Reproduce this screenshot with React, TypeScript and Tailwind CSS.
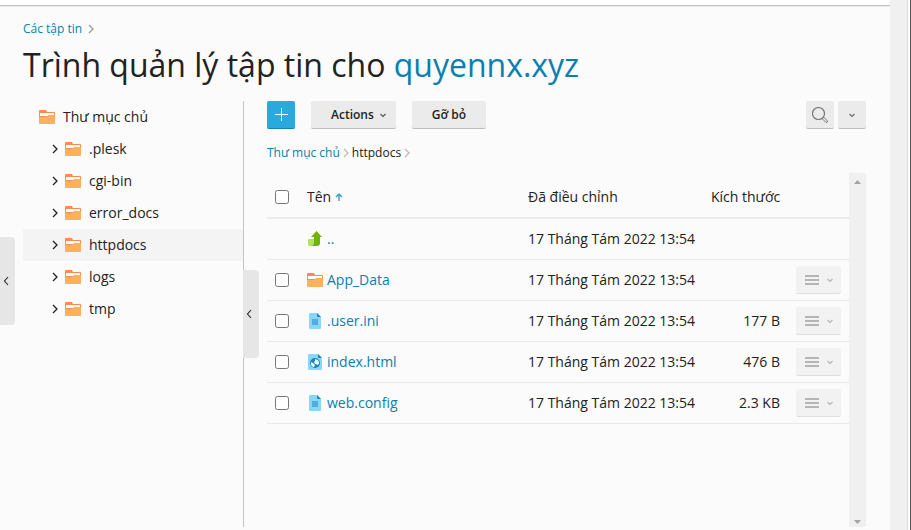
import type { ReactNode } from "react";

type FileKind = "folder" | "file" | "html";

const folders = [".plesk", "cgi-bin", "error_docs", "httpdocs", "logs", "tmp"];

const files: { name: string; kind: FileKind; date: string; size: string }[] = [
  { name: "App_Data", kind: "folder", date: "17 Tháng Tám 2022 13:54", size: "" },
  { name: ".user.ini", kind: "file", date: "17 Tháng Tám 2022 13:54", size: "177 B" },
  { name: "index.html", kind: "html", date: "17 Tháng Tám 2022 13:54", size: "476 B" },
  { name: "web.config", kind: "file", date: "17 Tháng Tám 2022 13:54", size: "2.3 KB" },
];

function FolderIcon() {
  return (
    <svg className="h-4 w-4 shrink-0" viewBox="0 0 16 16" aria-hidden="true">
      <path d="M0 2a1 1 0 0 1 1-1h6l1 2h7a1 1 0 0 1 1 1v5H0z" fill="#ff8a50" />
      <path d="M1 4h14v3H1z" fill="#fff" />
      <path d="M0 8h7l2-2h7v8a1 1 0 0 1-1 1H1a1 1 0 0 1-1-1z" fill="#ffb05c" />
    </svg>
  );
}

function FileIcon() {
  return (
    <svg className="h-4 w-4 shrink-0" viewBox="0 0 16 16" aria-hidden="true">
      <path d="M3 0h7l4 4v11a1 1 0 0 1-1 1H3a1 1 0 0 1-1-1V1a1 1 0 0 1 1-1z" fill="#8ad6f7" />
      <path d="M10 0l4 4h-3a1 1 0 0 1-1-1z" fill="#1b84b4" />
      <path d="M5 6h6v6H5z" fill="#4faedb" />
    </svg>
  );
}

function HtmlIcon() {
  return (
    <svg className="h-4 w-4 shrink-0" viewBox="0 0 16 16" aria-hidden="true">
      <path d="M2 0h9l4 4v11a1 1 0 0 1-1 1H2a1 1 0 0 1-1-1V1a1 1 0 0 1 1-1z" fill="#8ad6f7" />
      <path d="M11 0l4 4h-3a1 1 0 0 1-1-1z" fill="#1b84b4" />
      <circle cx="8" cy="9" r="5" fill="#1b84b4" />
      <path d="M4 8l2 1 2 2-1 2H6l-2-2zM8 5l3 1 1 2v2l-2 1-1-1H8L7 8l1-1z" fill="#e8f7fe" />
    </svg>
  );
}

function UpIcon() {
  return (
    <svg className="h-4 w-4 shrink-0" viewBox="0 0 16 16" aria-hidden="true">
      <path d="M2 8h5v7H3a2 2 0 0 1-2-2V9a1 1 0 0 1 1-1z" fill="#b0e35f" />
      <path d="M9.500 0L15 6h-2v6q0 3-3 3H5q2-1 2-3V6H4z" fill="#6fb500" />
    </svg>
  );
}

function Chevron({ dir, className }: { dir: "left" | "right" | "down"; className: string }) {
  const paths = {
    left: "M7 1L3.500 5 7 9",
    right: "M3 1l4 4-4 4",
    down: "M2.500 4L5 6.500 7.500 4",
  };
  return (
    <svg className={`h-[10px] w-[10px] shrink-0 ${className}`} viewBox="0 0 10 10" fill="none" stroke="currentColor" aria-hidden="true">
      <path d={paths[dir]} strokeWidth={dir === "right" ? 1.3 : 1.1} />
    </svg>
  );
}

function Button({ label, className, children }: { label?: string; className: string; children: ReactNode }) {
  return (
    <button
      type="button"
      aria-label={label}
      className={`flex h-7 items-center justify-center rounded-xs border-b text-xs font-semibold ${className}`}
    >
      {children}
    </button>
  );
}

const gray = "bg-[#ebebeb] border-[#bdbdbd]";

function KindIcon({ kind }: { kind: FileKind }) {
  if (kind === "folder") return <FolderIcon />;
  if (kind === "html") return <HtmlIcon />;
  return <FileIcon />;
}

function Sidebar() {
  return (
    <aside className="relative w-[221px] shrink-0 border-r border-[#c4c4c4]">
      <nav aria-label="Thư mục" className="flex flex-col">
        <a href="#root" className="flex h-8 items-center gap-2 pl-4">
          <FolderIcon />
          Thư mục chủ
        </a>
        {folders.map((name) => (
          <a
            key={name}
            href={`#${name}`}
            className={`flex h-8 items-center pl-[27px] ${name === "httpdocs" ? "bg-[#f4f4f4]" : ""}`}
          >
            <Chevron dir="right" className="mr-[5px]" />
            <FolderIcon />
            <span className="ml-2">{name}</span>
          </a>
        ))}
      </nav>
      <button
        type="button"
        aria-label="Thu gọn cây thư mục"
        className="absolute top-[169px] left-full flex h-[88px] w-4 items-center justify-start rounded-r bg-[#e6e6e6] pl-px"
      >
        <Chevron dir="left" className="" />
      </button>
    </aside>
  );
}

function FileTable() {
  return (
    <table className="w-full table-fixed border-collapse">
      <colgroup>
        <col className="w-8" />
        <col />
        <col className="w-[183px]" />
        <col className="w-[85px]" />
        <col className="w-[61px]" />
      </colgroup>
      <thead>
        <tr className="h-[45px] border-b-2 border-[#ebebeb] text-left">
          <th className="px-2 pt-1 font-normal">
            <input type="checkbox" aria-label="Chọn tất cả" className="block h-[14px] w-[14px]" />
          </th>
          <th className="px-2 pt-1 font-normal">
            <span className="flex items-center gap-1">
              Tên
              <svg className="h-2 w-2" viewBox="0 0 8 8" fill="none" stroke="#3a9cc8" strokeWidth="1.4" aria-hidden="true">
                <path d="M4 8V1M1 4l3-3 3 3" />
              </svg>
            </span>
          </th>
          <th className="px-2 pt-1 font-normal">Đã điều chỉnh</th>
          <th className="px-2 pt-1 text-right font-normal whitespace-nowrap">Kích thước</th>
          <th aria-label="Thao tác" />
        </tr>
      </thead>
      <tbody>
        <tr className="h-[41px] border-b border-[#e9e9e9]">
          <td />
          <td className="px-2">
            <a href="#up" className="flex items-center gap-1 text-[#0a7fb0]">
              <UpIcon />
              ..
            </a>
          </td>
          <td className="px-2 whitespace-nowrap">17 Tháng Tám 2022 13:54</td>
          <td />
          <td />
        </tr>
        {files.map((file) => (
          <tr key={file.name} className="h-[41px] border-b border-[#e9e9e9]">
            <td className="px-2">
              <input type="checkbox" aria-label={file.name} className="block h-[14px] w-[14px]" />
            </td>
            <td className="px-2">
              <a href={`#${file.name}`} className="flex items-center gap-1 text-[#0a7fb0]">
                <KindIcon kind={file.kind} />
                {file.name}
              </a>
            </td>
            <td className="px-2 whitespace-nowrap">{file.date}</td>
            <td className="px-2 text-right whitespace-nowrap">{file.size}</td>
            <td className="px-2">
              <Button label={`Thao tác với ${file.name}`} className="w-full gap-1.5 border-[#dedede] bg-[#f2f2f2] pt-px pl-[3px] text-[#b5b5b5]">
                <svg className="h-[10px] w-[14px]" viewBox="0 0 14 10" fill="currentColor" aria-hidden="true">
                  <path d="M0 0h14v2H0zM0 4h14v2H0zM0 8h14v2H0z" />
                </svg>
                <Chevron dir="down" className="" />
              </Button>
            </td>
          </tr>
        ))}
      </tbody>
    </table>
  );
}

function Files() {
  return (
    <section className="ml-[23px] flex min-w-0 flex-1 flex-col">
      <div className="flex gap-4">
        <Button label="Thêm" className="w-7 border-[#1b82ad] bg-[#28aade] text-white">
          <svg className="h-[13px] w-[13px]" viewBox="0 0 13 13" fill="currentColor" aria-hidden="true">
            <path d="M6 0h1v13H6zM0 6h13v1H0z" />
          </svg>
        </Button>
        <Button className={`gap-1 pr-2 pl-5 ${gray}`}>
          Actions
          <Chevron dir="down" className="text-[#555]" />
        </Button>
        <Button className={`px-5 ${gray}`}>Gỡ bỏ</Button>
        <div className="ml-auto flex gap-1">
          <Button label="Tìm kiếm" className={`w-7 text-[#777] ${gray}`}>
            <svg className="h-4 w-4" viewBox="0 0 16 16" fill="none" stroke="currentColor" aria-hidden="true">
              <circle cx="6.500" cy="6.500" r="6" strokeWidth="1.200" />
              <path d="M10 11.500l1.500-1.500 4 4q.3 1.300-1.500 1.500z" />
            </svg>
          </Button>
          <Button label="Tùy chọn" className={`w-7 text-[#666] ${gray}`}>
            <Chevron dir="down" className="" />
          </Button>
        </div>
      </div>
      <nav aria-label="Đường dẫn" className="mt-4 flex h-4 items-center text-xs">
        <a href="#root" className="text-[#0a7fb0]">Thư mục chủ</a>
        <Chevron dir="right" className="mx-px text-[#bbb]" />
        <span>httpdocs</span>
        <Chevron dir="right" className="mx-px text-[#bbb]" />
      </nav>
      <div className="mt-3 flex flex-1">
        <div className="min-w-0 flex-1">
          <FileTable />
        </div>
        <div className="flex w-[17px] flex-col items-center justify-between bg-[#f0f0f0] pt-[7px] pb-[3px] text-[#a3a3a3]" aria-hidden="true">
          <svg className="h-1 w-[7px]" viewBox="0 0 7 4" fill="currentColor">
            <path d="M0 4l3.500-4L7 4z" />
          </svg>
          <svg className="h-1 w-[7px]" viewBox="0 0 7 4" fill="currentColor">
            <path d="M0 0h7L3.500 4z" />
          </svg>
        </div>
      </div>
    </section>
  );
}

export default function App() {
  return (
    <div className="flex min-h-screen bg-[#fbfbfb] font-['Open_Sans','Noto_Sans',sans-serif] text-sm text-[#222]">
      <div className="relative flex min-w-0 flex-1 flex-col">
        <div className="h-[6px] border-b border-[#c4c4c4] bg-white" />
        <div className="h-px bg-[#e6e6e6]" />
        <button
          type="button"
          aria-label="Thu gọn thanh bên"
          className="absolute top-[237px] left-0 flex h-[88px] w-[15px] items-center justify-start rounded-r bg-[#e6e6e6] pl-px"
        >
          <Chevron dir="left" className="" />
        </button>
        <main className="flex flex-1 flex-col pr-6 pb-[3px] pl-[23px]">
          <nav aria-label="Breadcrumb" className="mt-[14px] flex h-4 items-center gap-1 text-xs">
            <a href="#files" className="text-[#0a7fb0]">Các tập tin</a>
            <Chevron dir="right" className="text-[#999]" />
          </nav>
          <h1 className="mt-2 mb-4 text-[32px] leading-10 font-normal whitespace-nowrap">
            Trình quản lý tập tin cho{" "}
            <a href="#domain" className="text-[#0a7fb0]">quyennx.xyz</a>
          </h1>
          <div className="flex flex-1">
            <Sidebar />
            <Files />
          </div>
        </main>
      </div>
      <div className="flex w-[21px] shrink-0 border-r border-[#555] bg-white">
        <div className="w-[18px] border-r border-[#d9d9d9] bg-[#f0f0f0]" />
      </div>
    </div>
  );
}
